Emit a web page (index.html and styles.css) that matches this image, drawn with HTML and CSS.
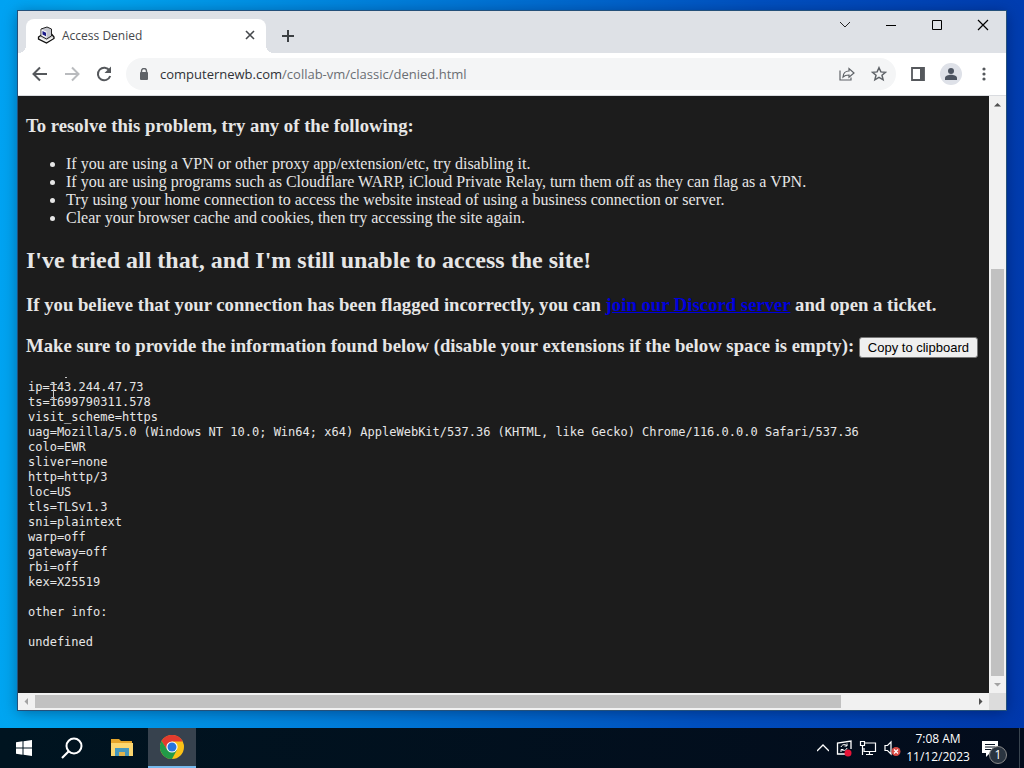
FILE: index.html
```html
<!DOCTYPE html>
<html lang="en">
<head>
<meta charset="utf-8">
<title>Access Denied</title>
<link rel="stylesheet" href="styles.css">
</head>
<body>
<main class="desktop">
  <section class="window">
    <header class="titlebar">
      <div class="tab">
        <svg class="favicon" width="18" height="18" viewBox="0 0 18 18">
          <path d="M1.500 11l4-2.500 9-.5 2.500 3v1.500l-7.500 4.500-8-4z" fill="#dcdcdc" stroke="#111" stroke-width="1.300"/>
          <path d="M4 3l6-2 4.500 2v7l-5 3L4 10z" fill="#c4c5cd" stroke="#222"/>
          <path d="M4.500 3.500l5 2v6.500l-5-2.500z" fill="#f5f5f5"/>
          <path d="M5.500 5l3.500 1.700v3.500L5.500 8.500z" fill="#1c1a88"/>
          <path d="M3 12.200l6.500 3 6-3.200" fill="none" stroke="#fff"/>
        </svg>
        <span class="tab-title">Access Denied</span>
        <button class="icon-btn tab-close" aria-label="Close tab"><svg width="10" height="10" viewBox="0 0 10 10"><path d="M1 1l8 8M9 1L1 9" stroke="#45484c" stroke-width="1.600"/></svg></button>
      </div>
      <button class="icon-btn new-tab" aria-label="New tab"><svg width="12" height="12" viewBox="0 0 12 12"><path d="M6 0v12M0 6h12" stroke="#3c4043" stroke-width="2"/></svg></button>
      <div class="caption">
        <button class="icon-btn" aria-label="Search tabs"><svg width="12" height="12" viewBox="0 0 12 12"><path d="M1 3l5 5 5-5" fill="none" stroke="#222"/></svg></button>
        <button class="icon-btn" aria-label="Minimize"><svg width="12" height="12" viewBox="0 0 12 12"><path d="M1 6.500h10" stroke="#000"/></svg></button>
        <button class="icon-btn" aria-label="Maximize"><svg width="12" height="12" viewBox="0 0 12 12"><path d="M1.500 1.500h9v9h-9z" fill="none" stroke="#000"/></svg></button>
        <button class="icon-btn" aria-label="Close"><svg width="12" height="12" viewBox="0 0 12 12"><path d="M1 1l10 10M11 1L1 11" stroke="#000" stroke-width="1.200"/></svg></button>
      </div>
    </header>
    <nav class="toolbar">
      <button class="icon-btn" aria-label="Back"><svg width="20" height="20" viewBox="0 0 20 20"><path d="M17 10H4M10 3.500L3.500 10l6.500 6.500" fill="none" stroke="#55585c" stroke-width="2"/></svg></button>
      <button class="icon-btn" aria-label="Forward"><svg width="20" height="20" viewBox="0 0 20 20"><path d="M3 10h13M10 3.500l6.500 6.500-6.500 6.500" fill="none" stroke="#b9bbbe" stroke-width="2"/></svg></button>
      <button class="icon-btn" aria-label="Reload"><svg width="20" height="20" viewBox="0 0 20 20"><path d="M15.500 6.500A6.300 6.300 0 1 0 16.200 12" fill="none" stroke="#55585c" stroke-width="2"/><path d="M17 2.500v6.500h-6.500z" fill="#55585c"/></svg></button>
      <div class="omnibox">
        <svg width="10" height="12" viewBox="0 0 10 12"><path d="M2.500 5V3a2.500 2.500 0 0 1 5 0v2" fill="none" stroke="#5f6368" stroke-width="1.400"/><rect x="1" y="4" width="8" height="8" rx="1" fill="#5f6368"/></svg>
        <a class="url" href="#"><span class="host">computernewb.com</span>/collab-vm/classic/denied.html</a>
        <button class="icon-btn" aria-label="Share"><svg width="16" height="16" viewBox="0 0 16 16"><path d="M1 4.500V14h11v-2.500M4 11c.3-4 2.500-6 6-6V2.500L15 7l-5 4.300V9C7.500 9 5.500 9.500 4 11z" fill="none" stroke="#5f6368" stroke-width="1.200"/></svg></button>
        <button class="icon-btn" aria-label="Bookmark this tab"><svg width="16" height="16" viewBox="0 0 16 16"><path d="M8 1.700l1.900 4.200 4.600.4-3.500 3 1.100 4.500L8 11.400l-4.100 2.400L5 9.300l-3.500-3 4.600-.4z" fill="none" stroke="#5f6368" stroke-width="1.500"/></svg></button>
      </div>
      <button class="icon-btn" aria-label="Side panel"><svg width="16" height="16" viewBox="0 0 16 16"><path d="M2 2h12v12H2z" fill="none" stroke="#55585c" stroke-width="1.800"/><path d="M10 2h4v12h-4z" fill="#55585c"/></svg></button>
      <button class="icon-btn avatar" aria-label="Profile"><svg width="22" height="22" viewBox="0 0 22 22"><circle cx="11" cy="11" r="11" fill="#dee1e8"/><circle cx="11" cy="8" r="3" fill="#4d5461"/><path d="M5 17v-2c0-2 3.500-3.200 6-3.200s6 1.200 6 3.200v2z" fill="#4d5461"/></svg></button>
      <button class="icon-btn" aria-label="Menu"><svg width="16" height="16" viewBox="0 0 16 16" fill="#55585c"><circle cx="8" cy="3" r="1.600"/><circle cx="8" cy="8" r="1.600"/><circle cx="8" cy="13" r="1.600"/></svg></button>
    </nav>
    <div class="viewport">
      <article class="page">
        <h3>To resolve this problem, try any of the following:</h3>
        <ul>
          <li>If you are using a VPN or other proxy app/extension/etc, try disabling it.</li>
          <li>If you are using programs such as Cloudflare WARP, iCloud Private Relay, turn them off as they can flag as a VPN.</li>
          <li>Try using your home connection to access the website instead of using a business connection or server.</li>
          <li>Clear your browser cache and cookies, then try accessing the site again.</li>
        </ul>
        <h2>I've tried all that, and I'm still unable to access the site!</h2>
        <h3>If you believe that your connection has been flagged incorrectly, you can <a class="discord" href="#">join our Discord server</a> and open a ticket.</h3>
        <h3>Make sure to provide the information found below (disable your extensions if the below space is empty): <button class="copy">Copy to clipboard</button></h3>
        <div class="trace">
          <pre>ip=143.244.47.73
ts=1699790311.578
visit_scheme=https
uag=Mozilla/5.0 (Windows NT 10.0; Win64; x64) AppleWebKit/537.36 (KHTML, like Gecko) Chrome/116.0.0.0 Safari/537.36
colo=EWR
sliver=none
http=http/3
loc=US
tls=TLSv1.3
sni=plaintext
warp=off
gateway=off
rbi=off
kex=X25519

other info:

undefined</pre>
          <svg class="cursor" width="20" height="28" viewBox="0 0 20 28"><path d="M1 8.500h3m1 0h3M4.500 9v14M1 23.500h3m1 0h3" stroke="#c8c8c8" fill="none"/><path d="M16 1h2v1h-2z" fill="#c8c8c8"/></svg>
        </div>
      </article>
      <div class="scroll vertical">
        <svg width="17" height="17" viewBox="0 0 17 17"><path d="M5 10.500h7L8.500 7z" fill="#505050"/></svg>
        <div class="track"><div class="thumb"></div></div>
        <svg width="17" height="17" viewBox="0 0 17 17"><path d="M5 7h7l-3.500 3.500z" fill="#a3a3a3"/></svg>
      </div>
      <div class="scroll horizontal">
        <svg width="17" height="17" viewBox="0 0 17 17"><path d="M10 5v7L6.500 8.500z" fill="#a3a3a3"/></svg>
        <div class="track"><div class="thumb"></div></div>
        <svg width="17" height="17" viewBox="0 0 17 17"><path d="M7 5v7l3.500-3.500z" fill="#505050"/></svg>
      </div>
      <div class="corner"></div>
    </div>
  </section>
</main>
<footer class="taskbar">
  <button class="task" aria-label="Start"><svg width="16" height="16" viewBox="0 0 16 16" fill="#fff"><path d="M0 2.200l6.500-.9v6.200H0zM7.500 1.200L16 0v7.500H7.500zM0 8.500h6.500v6.200L0 13.800zM7.500 8.500H16V16l-8.500-1.200z"/></svg></button>
  <button class="task" aria-label="Search"><svg width="24" height="24" viewBox="0 0 24 24"><circle cx="14" cy="10" r="7.500" fill="none" stroke="#fff" stroke-width="2"/><path d="M8.500 15.500L2 22" stroke="#fff" stroke-width="2.200"/></svg></button>
  <button class="task" aria-label="File Explorer"><svg width="22" height="20" viewBox="0 0 22 20"><path d="M0 1h8l2 2h11v4H0z" fill="#e5a52b"/><path d="M0 5h22v13H0z" fill="#fbd66f"/><path d="M4 18v-8h14v8h-4v-4H8v4z" fill="#4597bd"/><path d="M8 14h6v4H8z" fill="#e0b44e"/></svg></button>
  <button class="task active" aria-label="Google Chrome"><svg width="24" height="24" viewBox="0 0 24 24"><circle cx="12" cy="12" r="12" fill="#fbc116"/><path d="M12 12V6.500h10.700A12 12 0 0 0 1.600 6L7 15z" fill="#e33b2e"/><path d="M1.600 6a12 12 0 0 0 10.400 18l5-9.200-5-2.800-5 2.600z" fill="#229a48"/><circle cx="12" cy="12" r="5.600" fill="#fff"/><circle cx="12" cy="12" r="4.500" fill="#2874de"/></svg></button>
  <div class="tray">
    <svg width="12" height="16" viewBox="0 0 12 16"><path d="M0 11l6-6 6 6" fill="none" stroke="#fff" stroke-width="1.300"/></svg>
    <svg width="18" height="18" viewBox="0 0 18 18"><path d="M13 15H2.500V4L16 2v8" fill="none" stroke="#fff" stroke-width="1.300"/><path d="M6 8c1-3 5-3 6-1V4.500M12 9c-1 3-4 3-6 1.500V13M9.500 7H12M6 10.500h2.500" fill="none" stroke="#fff"/><circle cx="13" cy="14" r="3.500" fill="#e81438"/></svg>
    <svg width="18" height="18" viewBox="0 0 18 18"><path d="M6 4h10.500v8.500H5V9M10.500 12.500V16M7 15.500h7" fill="none" stroke="#fff" stroke-width="1.200"/><path d="M1.500 2.500h4v4h-4zM3.500 7v9" fill="none" stroke="#fff" stroke-width="1.200"/></svg>
    <svg width="18" height="18" viewBox="0 0 18 18"><path d="M2 6.500h2.500L8 3v12l-3.500-3.500H2z" fill="none" stroke="#fff" stroke-width="1.200"/><circle cx="13" cy="12.500" r="4.500" fill="#da4a43"/><path d="M11 10.500l4 4m0-4l-4 4" stroke="#fff" stroke-width="1.200"/></svg>
    <div class="clock"><time>7:08 AM</time><time>11/12/2023</time></div>
    <button class="icon-btn notify" aria-label="Notifications"><svg width="18" height="17" viewBox="0 0 18 17"><path d="M1 1h16v12H9l-4 4v-4H1z" fill="#fff"/><path d="M4 4.500h10M4 7h10M4 9.500h7" stroke="#071322"/></svg><span class="badge">1</span></button>
  </div>
</footer>
</body>
</html>
```
FILE: styles.css
```css
* { box-sizing: border-box; }
body {
  margin: 0;
  height: 100vh;
  display: flex;
  flex-direction: column;
  overflow: hidden;
  font-family: "Open Sans", "Noto Sans", sans-serif;
  font-size: 12px;
}
button { font: inherit; }
svg { display: block; flex: none; }

.desktop {
  flex: 1;
  min-height: 0;
  display: flex;
  padding: 11px 18px 18px;
  background: linear-gradient(95deg, #00a2f2 0, #00a6f0 8%, #0080dc 35%, #0050c0 70%, #0038ac 100%);
}
.window {
  flex: 1;
  min-width: 0;
  display: flex;
  flex-direction: column;
  background: #fff;
  box-shadow: 0 0 0 1px #24507a, 0 2px 14px rgba(0, 0, 30, .4);
}
.icon-btn {
  display: grid;
  place-items: center;
  flex: none;
  padding: 0;
  border: 0;
  background: none;
}

.titlebar {
  display: flex;
  height: 42px;
  padding: 8px 0 0 8px;
  background: #dee1e6;
}
.tab {
  position: relative;
  display: flex;
  align-items: center;
  gap: 7px;
  width: 240px;
  padding: 0 10px 2px 11px;
  border-radius: 8px 8px 0 0;
  background: #fff;
  color: #45484c;
}
.tab::before,
.tab::after {
  content: "";
  position: absolute;
  bottom: 0;
  width: 8px;
  height: 8px;
}
.tab::before {
  right: 100%;
  background: radial-gradient(circle at 0 0, #dee1e6 8px, #fff 8px);
}
.tab::after {
  left: 100%;
  background: radial-gradient(circle at 100% 0, #dee1e6 8px, #fff 8px);
}
.tab-title { flex: 1; }
.tab-close { width: 12px; height: 16px; }
.new-tab { width: 44px; height: 34px; }
.caption { display: flex; margin: -8px 0 0 auto; height: 28px; }
.caption .icon-btn { width: 46px; }

.toolbar {
  display: flex;
  align-items: center;
  gap: 12px;
  height: 43px;
  padding: 0 12px;
  border-bottom: 1px solid #dadce0;
}
.omnibox {
  flex: 1;
  display: flex;
  align-items: center;
  gap: 16px;
  height: 32px;
  padding: 0 9px 0 13px;
  border-radius: 16px;
  background: #f4f5f6;
}
.url {
  flex: 1;
  margin-left: -5px;
  color: #6a6e73;
  font-size: 13px;
  text-decoration: none;
}
.host { color: #303236; }
.toolbar > .icon-btn { min-width: 20px; }

.viewport {
  flex: 1;
  min-height: 0;
  display: grid;
  grid-template-columns: minmax(0, 1fr) 17px;
  grid-template-rows: minmax(0, 1fr) 17px;
}
.page {
  overflow: hidden;
  padding: 0 8px;
  background: #1c1c1c;
  color: #e6e6e6;
  font-family: "Liberation Serif", serif;
  font-size: 16px;
  white-space: nowrap;
}
.page li { line-height: 18px; }
.discord { color: #0000dd; }
.copy {
  height: 21px;
  padding: 0 8px;
  border: 1px solid #767676;
  border-radius: 3px;
  background: #efefef;
  color: #000;
  font: 13px "Liberation Sans", sans-serif;
}
.trace { position: relative; padding: 3px 2px; }
.trace pre {
  margin: 0;
  font: 12px/15px "DejaVu Sans Mono", monospace;
}
.cursor { position: absolute; left: 23px; top: -1px; }

.scroll { display: flex; background: #f1f1f1; }
.vertical { flex-direction: column; }
.track { flex: 1; display: grid; }
.thumb { background: #c1c1c1; }
.vertical .track { grid-template-rows: 156fr 407fr; padding: 0 2px; }
.vertical .thumb { grid-row: 2; }
.horizontal .track { grid-template-columns: 806fr 131fr; padding: 2px 0; }
.corner { background: #dcdcdc; }

.taskbar {
  display: flex;
  height: 40px;
  background: linear-gradient(90deg, #001420, #030c1c);
  color: #fff;
}
.task {
  display: grid;
  place-items: center;
  width: 48px;
  padding: 0;
  border: 0;
  background: none;
}
.task:nth-child(3) { width: 52px; }
.task.active { background: #37424e; border-bottom: 2px solid #76b9ed; }
.tray {
  display: flex;
  align-items: center;
  gap: 6px;
  margin: 0 4px 0 auto;
  padding-right: 2px;
  border-right: 1px solid #39444f;
}
.clock {
  display: flex;
  flex-direction: column;
  align-items: center;
  width: 62px;
  line-height: 18px;
}
.notify {
  position: relative;
  justify-items: start;
  width: 42px;
  height: 40px;
  padding-left: 6px;
}
.badge {
  position: absolute;
  right: 10px;
  bottom: 4px;
  width: 18px;
  height: 18px;
  border: 1px solid #888;
  border-radius: 50%;
  background: #2a3440;
  color: #fff;
  line-height: 16px;
}
```
